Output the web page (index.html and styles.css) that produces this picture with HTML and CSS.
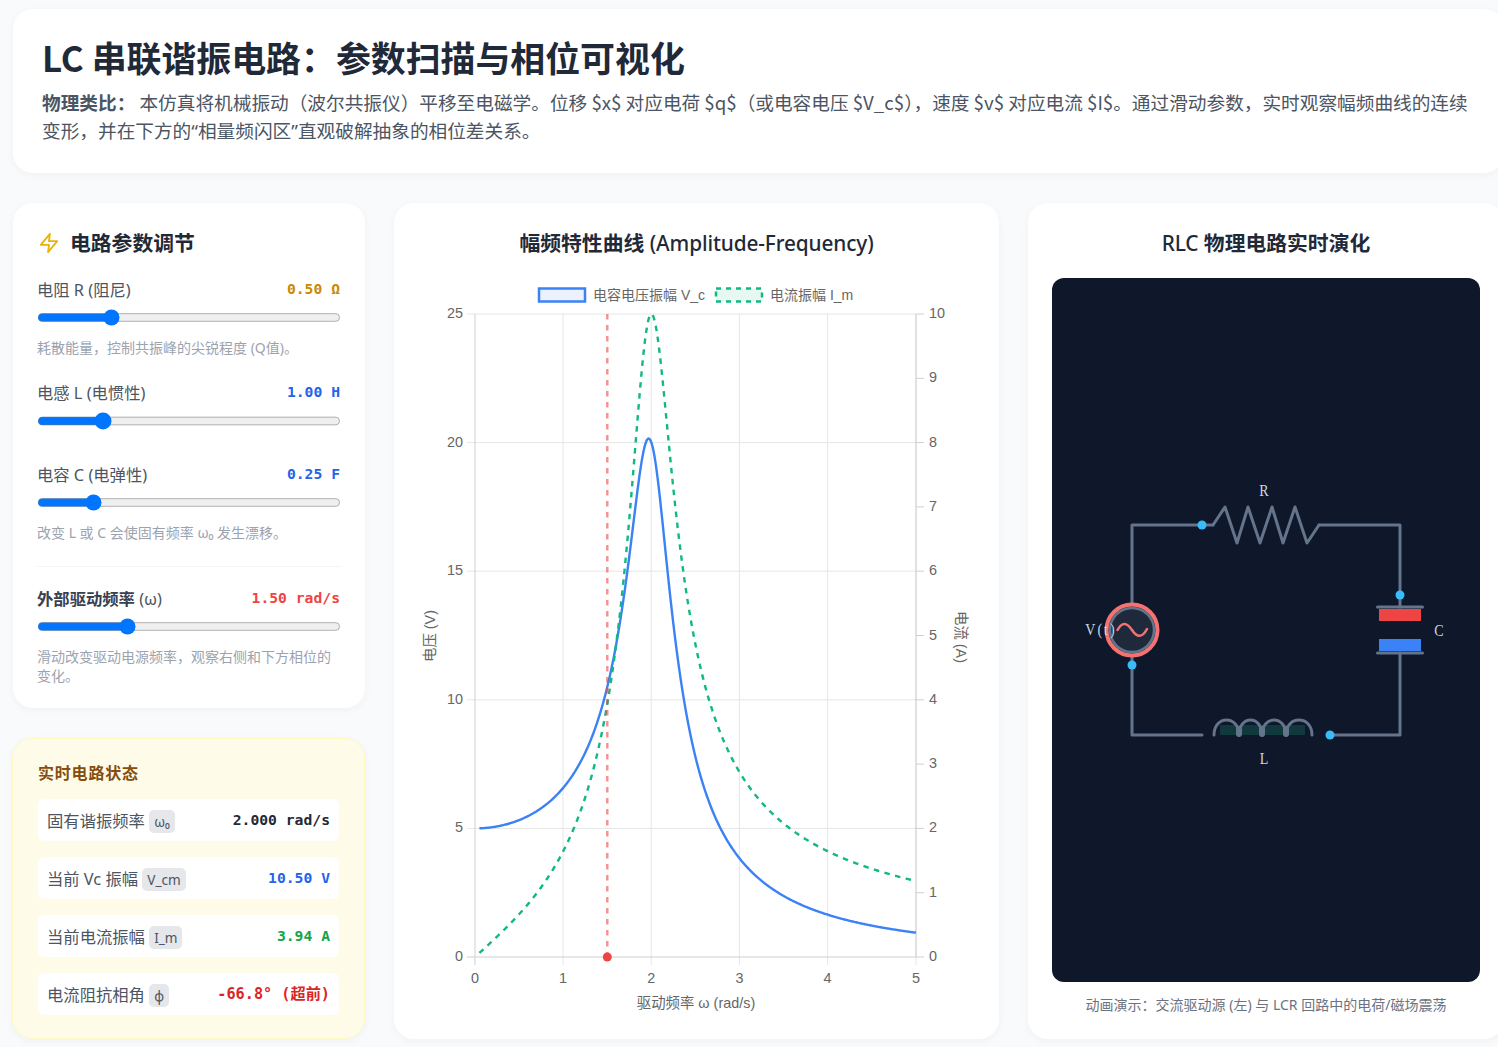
FILE: index.html
```html
<!DOCTYPE html>
<html lang="zh-CN">
<head>
  <meta charset="UTF-8" />
  <title>LC 串联谐振电路</title>
  <link rel="stylesheet" href="styles.css">
</head>
<body>
<div class="page">

  <header class="intro">
    <h1>LC 串联谐振电路：参数扫描与相位可视化</h1>
    <p><strong>物理类比：</strong> 本仿真将机械振动（波尔共振仪）平移至电磁学。位移 $x$ 对应电荷 $q$（或电容电压 $V_c$），速度 $v$ 对应电流 $I$。通过滑动参数，实时观察幅频曲线的连续变形，并在下方的<span class="quote">“</span>相量频闪区<span class="quote">”</span>直观破解抽象的相位差关系。</p>
  </header>

  <main class="columns">

    <div class="side">
      <section class="card controls">
        <h2 class="controls-title">
          <svg class="zap" viewBox="0 0 24 24" width="22" height="22"><path d="M13 2 3 14h9l-1 8 10-12h-9l1-8z"/></svg>
          电路参数调节
        </h2>

        <div class="param">
          <div class="param-head"><label>电阻 R (阻尼)</label><span class="num amber">0.50 Ω</span></div>
          <input type="range" min="0.05" max="2" step="0.01" value="0.5" />
          <p class="hint">耗散能量，控制共振峰的尖锐程度 (Q值)。</p>
        </div>

        <div class="param param-tight">
          <div class="param-head"><label>电感 L (电惯性)</label><span class="num blue">1.00 H</span></div>
          <input type="range" min="0.2" max="4.2" step="0.01" value="1" />
        </div>

        <div class="param">
          <div class="param-head"><label>电容 C (电弹性)</label><span class="num blue">0.25 F</span></div>
          <input type="range" min="0.05" max="1.25" step="0.01" value="0.25" />
          <p class="hint">改变 L 或 C 会使固有频率 ω₀ 发生漂移。</p>
        </div>

        <div class="param param-drive">
          <div class="param-head"><label><b>外部驱动频率</b> (ω)</label><span class="num red">1.50 rad/s</span></div>
          <input type="range" min="0.1" max="5" step="0.01" value="1.5" />
          <p class="hint">滑动改变驱动电源频率，观察右侧和下方相位的变化。</p>
        </div>
      </section>

      <section class="card status">
        <h3>实时电路状态</h3>
        <div class="status-row"><span>固有谐振频率 <code>ω₀</code></span><span class="num dark">2.000 rad/s</span></div>
        <div class="status-row"><span>当前 Vc 振幅 <code>V_cm</code></span><span class="num blue">10.50 V</span></div>
        <div class="status-row"><span>当前电流振幅 <code>I_m</code></span><span class="num green">3.94 A</span></div>
        <div class="status-row"><span>电流阻抗相角 <code>φ</code></span><span class="num crimson">-66.8° (超前)</span></div>
      </section>
    </div>

    <section class="card chart-card">
      <h2 class="panel-title">幅频特性曲线 <span class="latin">(Amplitude-Frequency)</span></h2>
      <svg class="chart" viewBox="0 0 557 737" width="557" height="737">
        <!-- legend -->
        <rect class="swatch-v" x="121" y="10.5" width="46" height="13" />
        <text class="legend" x="175" y="22">电容电压振幅 V_c</text>
        <rect class="swatch-i" x="298" y="10.5" width="46" height="13" />
        <text class="legend" x="352" y="22">电流振幅 I_m</text>

        <!-- grid, left ticks -->
        <g class="grid">
          <path d="M49 36H498M49 164.6H498M49 293.2H498M49 421.8H498M49 550.4H498" />
          <path d="M145 36V687M233.2 36V687M321.4 36V687M409.6 36V687M498 36V687" />
        </g>
        <g class="axis">
          <path d="M57 36V687M49 679H498M498 36V679" />
          <path d="M498 36h8M498 100.3h8M498 164.6h8M498 228.9h8M498 293.2h8M498 357.5h8M498 421.8h8M498 486.1h8M498 550.4h8M498 614.7h8M498 679h8" />
        </g>

        <g class="tick end">
          <text x="45" y="40">25</text><text x="45" y="168.6">20</text><text x="45" y="297.2">15</text>
          <text x="45" y="425.8">10</text><text x="45" y="554.4">5</text><text x="45" y="683">0</text>
        </g>
        <g class="tick">
          <text x="511" y="40">10</text><text x="511" y="104.3">9</text><text x="511" y="168.6">8</text>
          <text x="511" y="232.9">7</text><text x="511" y="297.2">6</text><text x="511" y="361.5">5</text>
          <text x="511" y="425.8">4</text><text x="511" y="490.1">3</text><text x="511" y="554.4">2</text>
          <text x="511" y="618.7">1</text><text x="511" y="683">0</text>
        </g>
        <g class="tick middle">
          <text x="57" y="705">0</text><text x="145" y="705">1</text><text x="233.2" y="705">2</text>
          <text x="321.4" y="705">3</text><text x="409.6" y="705">4</text><text x="498" y="705">5</text>
        </g>

        <text class="tick middle" x="278" y="730">驱动频率 ω (rad/s)</text>
        <text class="tick middle" transform="translate(17 358) rotate(-90)">电压 (V)</text>
        <text class="tick middle" transform="translate(538 359) rotate(90)">电流 (A)</text>

        <path id="curveV" class="curve-v" />
        <path id="curveI" class="curve-i" />
        <path class="drive-line" d="M189.3 36V679" />
        <circle class="drive-dot" cx="189.3" cy="679" r="4.5" />
      </svg>
    </section>

    <section class="card circuit-card">
      <h2 class="panel-title"><span class="latin">RLC</span> 物理电路实时演化</h2>
      <div class="stage">
        <svg viewBox="0 0 428 704" width="428" height="704">
          <path class="wire" d="M80 330V247H161M267 247H348V329M348 375V457H278M150 457H80V352" />
          <path class="wire" d="M161 247 173 229 185 265 196 229 208 265 220 229 231 265 243 229 255 265 267 247" />

          <rect class="coil-fill" x="168" y="447" width="85" height="10" />
          <path class="wire" d="M162 457c0-20 25-20 25 0c0-20 23-20 23 0c0-20 24-20 24 0c0-20 26-20 26 0" />
          <path class="coil-joint" d="M187 451v5M210 451v5M234 451v5" />

          <path class="wire" d="M325.500 329H370.500M325.500 375H370.500" />
          <rect class="plate-pos" x="327" y="331" width="42" height="12" />
          <rect class="plate-neg" x="327" y="361" width="42" height="12" />

          <circle class="source-ring" cx="80" cy="352" r="25.500" />
          <circle class="source-core" cx="80" cy="352" r="22" />
          <path class="source-wave" d="M65.500 352Q72 340 80 352T95 351" />

          <circle class="charge" cx="150" cy="247" r="4.500" />
          <circle class="charge" cx="348" cy="317" r="4.500" />
          <circle class="charge" cx="80" cy="387" r="4.500" />
          <circle class="charge" cx="278" cy="457" r="4.500" />

          <text class="part" transform="translate(213 218) scale(1 1.15)">R</text>
          <text class="part" transform="translate(388 358) scale(1 1.15)">C</text>
          <text class="part" transform="translate(213 486) scale(1 1.15)">L</text>
          <text class="part" transform="translate(49 357) scale(1 1.15)">V(t)</text>
        </svg>
      </div>
      <p class="caption">动画演示：交流驱动源 (左) 与 LCR 回路中的电荷/磁场震荡</p>
    </section>

  </main>
</div>
<script src="chart.js"></script>
</body>
</html>
```

FILE: styles.css
```css
html {
  overflow: hidden;
}
body {
  margin: 0;
  background: #f8fafc;
  font-family: "Noto Sans", "Noto Sans CJK SC", sans-serif;
  color: #1f2937;
}
.page {
  width: 1491px;
  padding: 9px 0 8px 13px;
}
.card, .intro {
  background: #fff;
  border-radius: 20px;
  box-shadow: 0 2px 8px rgba(0, 0, 0, 0.04);
}

.intro {
  height: 164px;
  box-sizing: border-box;
  padding: 27px 29px;
  margin-bottom: 30px;
  font-family: "Noto Sans CJK SC", "Noto Sans", sans-serif;
}
.intro h1 {
  margin: 0 0 10px;
  font-size: 34.9px;
  line-height: 42px;
  font-weight: 700;
}
.intro p {
  margin: 0;
  font-size: 18.66px;
  line-height: 28px;
  color: #4b5563;
}
.quote {
  font-family: "Noto Sans", sans-serif;
}

.columns {
  display: grid;
  grid-template-columns: 352px 605px 476px;
  column-gap: 29px;
  height: 836px;
}
.side {
  display: flex;
  flex-direction: column;
  gap: 30px;
}

.controls {
  height: 505px;
  box-sizing: border-box;
  padding: 24px 24px;
}
.controls-title {
  display: flex;
  align-items: center;
  gap: 10px;
  margin: 0 0 19px 1px;
  font-size: 20.8px;
  line-height: 32px;
  font-weight: 700;
}
.zap {
  fill: none;
  stroke: #eab308;
  stroke-width: 2;
  stroke-linejoin: round;
  stroke-linecap: round;
}
.param {
  margin-bottom: 24px;
}
.param-tight {
  margin-bottom: 33px;
}
.param-drive {
  border-top: 1px solid #f3f4f6;
  margin: 20px 0 0;
  padding-top: 20px;
}
.param-head {
  display: flex;
  justify-content: space-between;
  padding-right: 1px;
  font-size: 16.32px;
  line-height: 24px;
  color: #4b5563;
}
.param-head b {
  color: #374151;
}
.param input {
  display: block;
  zoom: 1.08;
  width: 100%;
  margin: 6.500px 0 0;
}
.hint {
  margin: 12px 0 0;
  font-size: 14px;
  line-height: 19px;
  color: #9ca3af;
}
.num {
  font-family: "DejaVu Sans Mono", "Noto Sans CJK SC", monospace;
  font-weight: 700;
  font-size: 14.7px;
  line-height: 22px;
}
.amber { color: #ca8a04; }
.blue { color: #2563eb; }
.red { color: #ef4444; }
.green { color: #16a34a; }
.dark { color: #1f2937; }
.crimson { color: #dc2626; font-size: 15.2px; }

.status {
  flex: 1;
  margin-left: -1px;
  padding: 22px 25px 0;
  background: #fefce8;
  border: 1px solid #fef9c3;
}
.status h3 {
  margin: 0 0 14px;
  font-size: 16px;
  line-height: 24px;
  letter-spacing: 0.8px;
  color: #854d0e;
}
.status-row {
  display: flex;
  justify-content: space-between;
  align-items: center;
  height: 42px;
  padding: 0 9px;
  margin-bottom: 16px;
  background: #fff;
  border-radius: 6px;
  font-size: 16.32px;
  color: #4b5563;
}
.status-row code {
  font-family: inherit;
  font-size: 13.6px;
  padding: 2px 5px;
  background: #e5e7eb;
  border-radius: 5px;
}

.chart-card, .circuit-card {
  padding: 24px;
  text-align: center;
}
.circuit-card {
  padding-bottom: 23px;
}
.panel-title {
  margin: 0;
  font-size: 20.8px;
  line-height: 32px;
  font-weight: 700;
}
.latin {
  font-weight: 500;
  letter-spacing: -0.12px;
}
.chart {
  display: block;
  margin: 19px 0 0;
}
.chart text {
  font-family: "Liberation Sans", "Noto Sans CJK SC", sans-serif;
  fill: #666;
}
.legend {
  font-size: 14px;
}
.tick {
  font-size: 14.4px;
}
.end { text-anchor: end; }
.middle { text-anchor: middle; }
.grid path {
  fill: none;
  stroke: #e6e6e6;
}
.axis path {
  fill: none;
  stroke: #cfcfcf;
}
.swatch-v {
  fill: rgba(59, 130, 246, 0.1);
  stroke: #3b82f6;
  stroke-width: 2.5;
}
.swatch-i {
  fill: rgba(16, 185, 129, 0.1);
  stroke: #10b981;
  stroke-width: 2.5;
  stroke-dasharray: 5 5;
}
.curve-v, .curve-i, .drive-line {
  fill: none;
  stroke-width: 2.4;
}
.curve-v { stroke: #3b82f6; }
.curve-i { stroke: #10b981; stroke-dasharray: 5.500 5.500; }
.drive-line { stroke: rgba(239, 68, 68, 0.6); stroke-dasharray: 5.500 5.500; }
.drive-dot { fill: #ef4444; }

.stage {
  height: 704px;
  margin-top: 19px;
  background: #0f172a;
  border-radius: 12px;
  overflow: hidden;
}
.stage svg {
  display: block;
}
.wire {
  fill: none;
  stroke: #64748b;
  stroke-width: 3;
  stroke-linejoin: round;
  stroke-linecap: round;
}
.coil-fill { fill: #11383c; }
.coil-joint {
  fill: none;
  stroke: #64748b;
  stroke-width: 6;
  stroke-linecap: round;
}
.plate-pos { fill: #ef4444; }
.plate-neg { fill: #3b82f6; }
.source-ring {
  fill: #1e293b;
  stroke: #f87171;
  stroke-width: 4;
}
.source-core {
  fill: #1e293b;
  stroke: #64748b;
  stroke-width: 2.500;
}
.source-wave {
  fill: none;
  stroke: #f87171;
  stroke-width: 2.500;
  stroke-linecap: round;
}
.charge { fill: #38bdf8; }
.part {
  font-family: "Liberation Serif", serif;
  font-size: 14px;
  letter-spacing: 2px;
  fill: #cbd5e1;
  text-anchor: middle;
}
.caption {
  margin: 13px 0 0;
  font-size: 14px;
  line-height: 20px;
  color: #6b7280;
}
```

FILE: chart.js
```js
// resonance curves for R = 0.5, L = 1, C = 0.25, source amplitude 5 V
const R = 0.5, L = 1, C = 0.25, V0 = 5;

const toX = w => 57 + w * 88.2;
const toVoltY = v => 679 - v * 25.72;
const toCurrentY = i => 679 - i * 64.3;

function voltage(w) {
  const a = 1 - w * w * L * C;
  const b = w * R * C;
  return V0 / Math.sqrt(a * a + b * b);
}

let dV = '';
let dI = '';
for (let n = 5; n <= 500; n++) {
  const w = n * 0.01;
  const v = voltage(w);
  const cmd = n === 5 ? 'M' : 'L';
  dV += cmd + toX(w).toFixed(2) + ' ' + toVoltY(v).toFixed(2);
  dI += cmd + toX(w).toFixed(2) + ' ' + toCurrentY(v * w * C).toFixed(2);
}
document.getElementById('curveV').setAttribute('d', dV);
document.getElementById('curveI').setAttribute('d', dI);
```
